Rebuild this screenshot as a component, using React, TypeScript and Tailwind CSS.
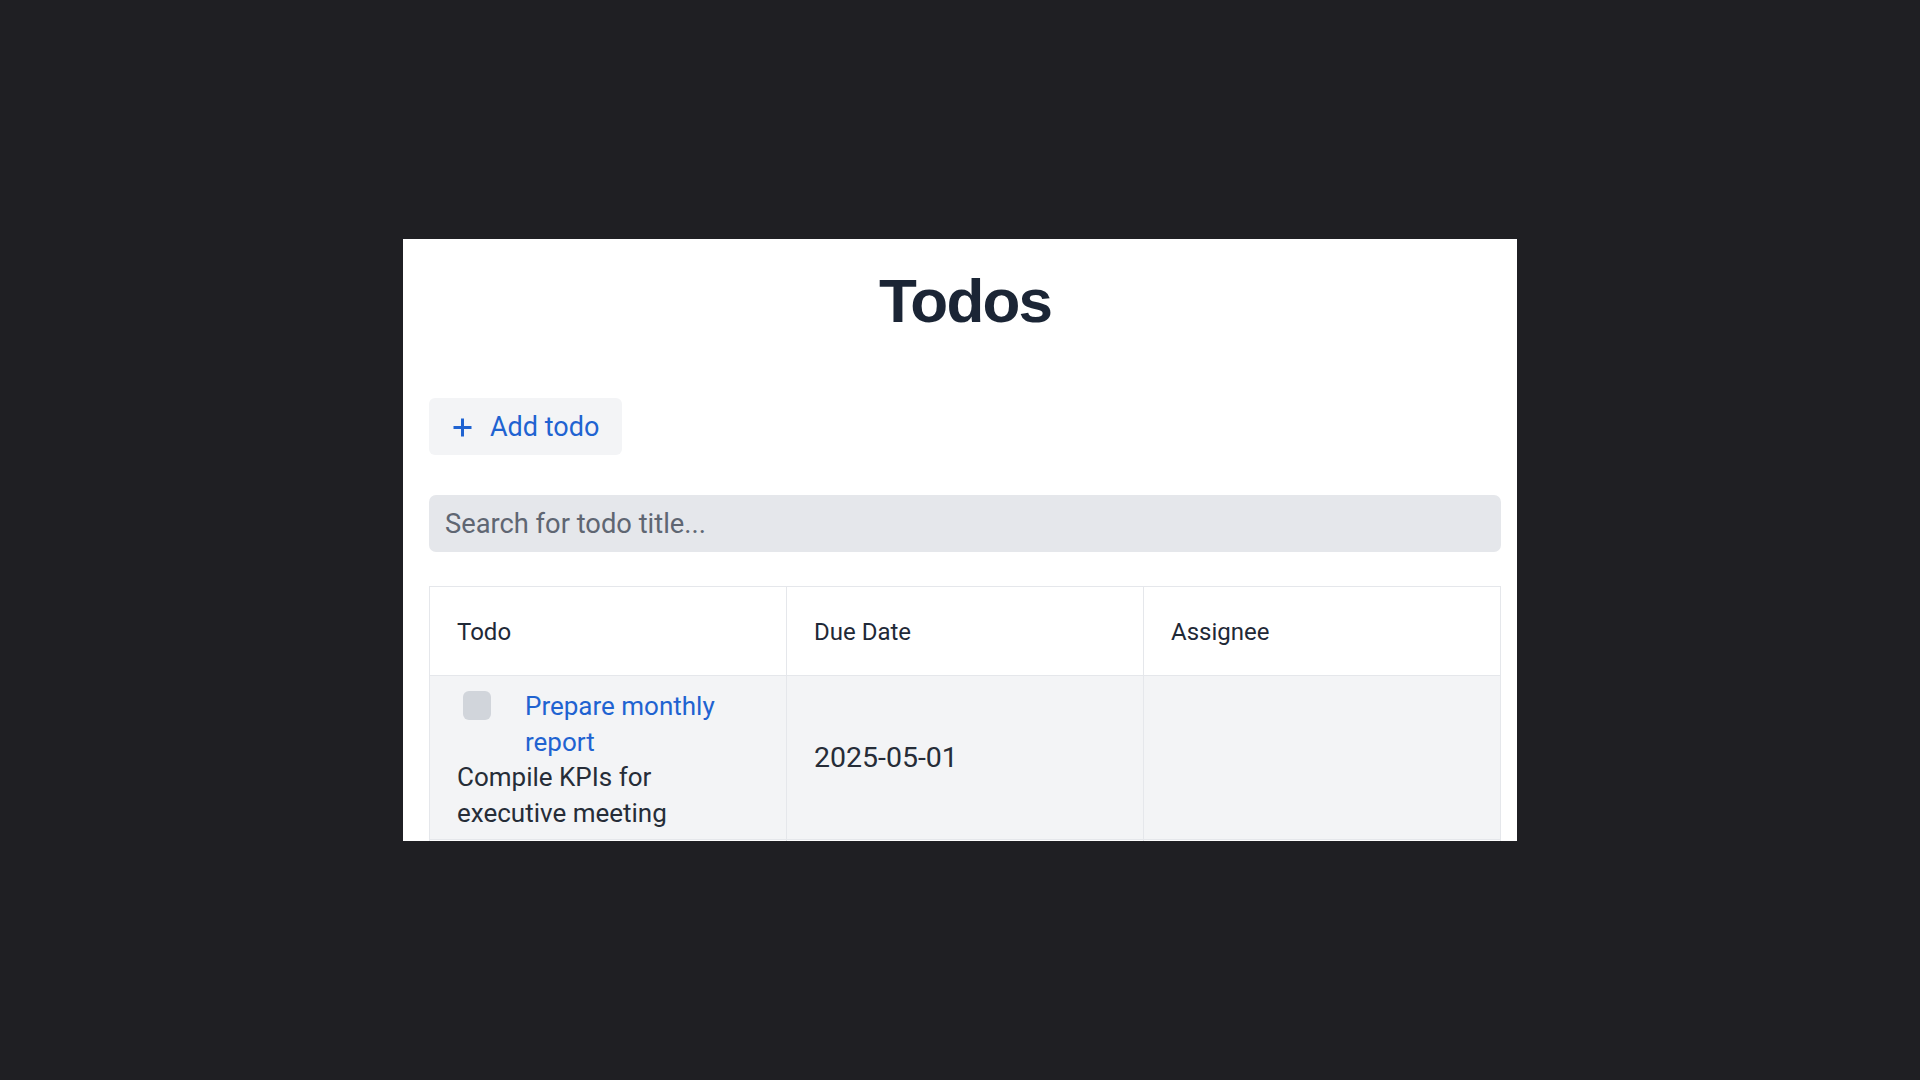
import React from "react";

function PlusIcon() {
  return (
    <svg width="21" height="21" viewBox="0 0 21 21" fill="none" aria-hidden="true">
      <path d="M10.5 1.5V19.5M1.5 10.5H19.5" stroke="#1f63d1" strokeWidth="3" />
    </svg>
  );
}

export default function App() {
  return (
    <div className="min-h-screen w-full bg-[#1f1f23] flex items-center justify-center">
      <div className="w-[1114px] h-[602px] bg-white overflow-hidden pt-[26px] pl-[26px] pr-[16px] font-['Roboto',sans-serif]">
        <h1 className="text-center font-['Liberation_Sans',Arial,sans-serif] font-bold text-[62px] leading-[72px] tracking-[-0.03em] text-[#1b2535]">
          Todos
        </h1>
        <button className="mt-[61px] h-[57px] w-[193px] pl-[23px] pt-[2px] flex items-center gap-[17px] bg-[#f3f4f6] rounded-[6px] text-[#1f63d1] text-[27px] leading-none">
          <PlusIcon />
          <span>Add todo</span>
        </button>
        <div className="mt-[40px] h-[57px] w-full bg-[#e5e7eb] rounded-[7px] flex items-center pl-[16px] pt-[3px]">
          <span className="text-[27.3px] text-[#5f6672] leading-none">Search for todo title...</span>
        </div>
        <table className="mt-[34px] w-full table-fixed border-collapse border border-[#e3e5e8]">
          <thead>
            <tr>
              <th className="h-[89px] px-[27px] pt-[2px] text-left align-middle font-normal text-[24px] leading-[36px] text-[#1f2937] border border-[#e5e7eb]">
                Todo
              </th>
              <th className="h-[89px] px-[27px] pt-[2px] text-left align-middle font-normal text-[24px] leading-[36px] text-[#1f2937] border border-[#e5e7eb]">
                Due Date
              </th>
              <th className="h-[89px] px-[27px] pt-[2px] text-left align-middle font-normal text-[24px] leading-[36px] text-[#1f2937] border border-[#e5e7eb]">
                Assignee
              </th>
            </tr>
          </thead>
          <tbody>
            <tr className="bg-[#f3f4f6]">
              <td className="px-[27px] pt-[13px] pb-[8px] align-middle border border-[#e5e7eb]">
                <div className="flex items-start">
                  <div className="ml-[6px] mt-[2px] w-[28px] h-[29px] shrink-0 rounded-[6px] bg-[#d1d5db]" />
                  <span className="ml-[34px] text-[26px] leading-[35.5px] text-[#1f63d1]">
                    Prepare monthly report
                  </span>
                </div>
                <p className="max-w-[280px] text-[26px] leading-[35.5px] text-[#262d38]">
                  Compile KPIs for executive meeting
                </p>
              </td>
              <td className="px-[27px] pt-[1px] align-middle border border-[#e5e7eb] text-[28.5px] leading-[36px] text-[#262d38]">
                2025-05-01
              </td>
              <td className="px-[27px] align-middle border border-[#e5e7eb]"></td>
            </tr>
            <tr className="bg-white">
              <td className="h-[160px] border border-[#e5e7eb]"></td>
              <td className="h-[160px] border border-[#e5e7eb]"></td>
              <td className="h-[160px] border border-[#e5e7eb]"></td>
            </tr>
          </tbody>
        </table>
      </div>
    </div>
  );
}
